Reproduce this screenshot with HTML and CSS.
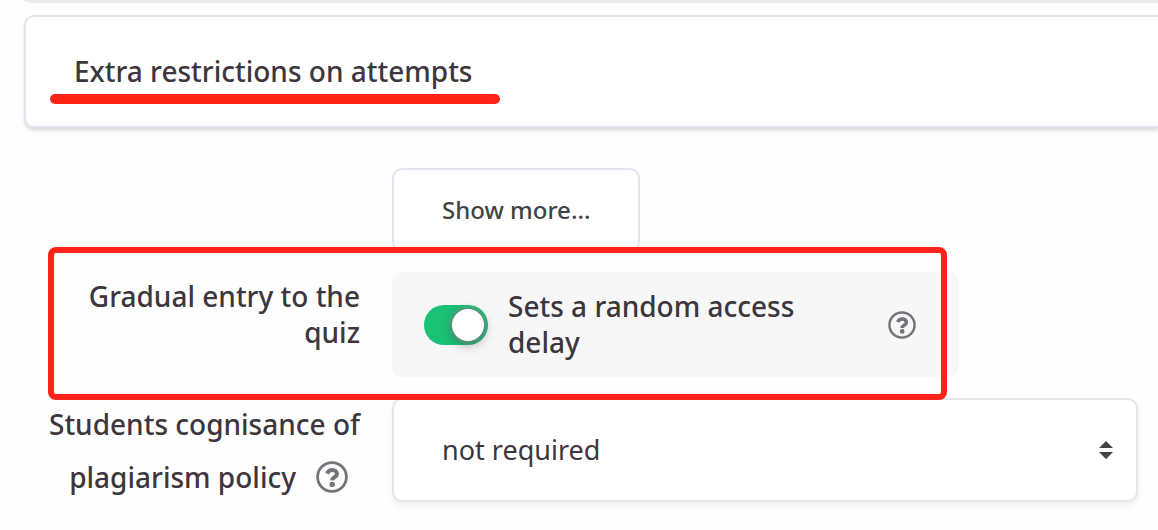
FILE: index.html
```html
<!DOCTYPE html>
<html lang="en">
<head>
<meta charset="utf-8">
<title>Quiz settings</title>
<link rel="stylesheet" href="styles.css">
</head>
<body>
<svg class="sprite" aria-hidden="true">
  <symbol id="help" viewBox="0 0 32 32">
    <circle cx="16" cy="16" r="14.4" fill="none" stroke="currentColor" stroke-width="2.8"/>
    <path d="M11 12.6C12 10.3 13.8 9 16.3 9C19.2 9 21 10.8 21 13C21 16.2 16.4 15.8 16.2 19.4" fill="none" stroke="currentColor" stroke-width="4"/>
    <circle cx="16.2" cy="23.4" r="2.7" fill="currentColor"/>
  </symbol>
</svg>
<main class="page">
  <div class="section-end"></div>
  <section class="card">
    <h2 class="card-title">Extra restrictions on attempts</h2>
  </section>
  <form class="form">
    <div class="field more">
      <button class="show-more" type="button">Show more...</button>
    </div>
    <div class="row marked">
      <label class="label" for="gradual">Gradual entry to the quiz</label>
      <div class="field">
        <div class="panel">
          <input class="switch" type="checkbox" role="switch" id="gradual" checked>
          <label class="panel-text" for="gradual">Sets a random access delay</label>
          <button class="help" type="button" aria-label="Help with gradual entry"><svg class="icon small"><use href="#help"/></svg></button>
        </div>
      </div>
    </div>
    <div class="row policy">
      <div class="label stacked">
        <label for="policy">Students cognisance of</label>
        <div class="label-end">
          <label for="policy">plagiarism policy</label>
          <button class="help" type="button" aria-label="Help with plagiarism policy"><svg class="icon"><use href="#help"/></svg></button>
        </div>
      </div>
      <div class="field select-box">
        <select class="select" id="policy"><option>not required</option></select>
        <svg class="arrows" viewBox="0 0 14 18" aria-hidden="true"><path d="M0 7L7 0L14 7ZM0 11H14L7 18Z" fill="#434343"/></svg>
      </div>
    </div>
  </form>
</main>
</body>
</html>
```
FILE: styles.css
```css
* {
  box-sizing: border-box;
}

body {
  margin: 0;
  background: #fefefe;
  color: #3d363d;
  font: 500 28px/36px "Noto Sans", "Open Sans", sans-serif;
}

.sprite {
  display: none;
}

.page {
  padding-left: 24px;
  overflow: hidden;
}

.section-end {
  height: 3px;
  border-bottom-left-radius: 10px 3px;
  background: #ececec;
  box-shadow: 0 2px 8px rgba(0, 0, 0, 0.04);
}

.card {
  margin-top: 12px;
  padding: 36px 0 37px 48px;
  border: 2px solid #e4e3f0;
  border-right: 0;
  border-radius: 10px 0 0 10px;
  background: #fff;
  box-shadow: 0 3px 3px rgba(0, 0, 0, 0.1), 0 3px 10px rgba(0, 0, 0, 0.03);
}

.card-title {
  position: relative;
  width: fit-content;
  margin: 0;
  font-size: 28px;
  font-weight: 500;
}

.card-title::after {
  content: "";
  position: absolute;
  top: 41px;
  left: -24px;
  right: -28px;
  height: 10px;
  border-radius: 5px;
  background: #ff2318;
}

.form {
  padding: 40px 20px 24px 0;
}

.more {
  margin-left: 368px;
}

.show-more {
  height: 84px;
  padding: 0 48px;
  border: 2px solid #e4e3f0;
  border-radius: 10px;
  background: #fff;
  color: #434343;
  font: inherit;
  font-size: 24px;
  display: block;
}

.row {
  display: grid;
  grid-template-columns: 336px minmax(0, 1fr);
  column-gap: 32px;
}

.marked {
  position: relative;
  margin-top: 20px;
}

.marked::after {
  content: "";
  position: absolute;
  inset: -25px 191px -23px 24px;
  border: 6px solid #ff2318;
  border-radius: 8px;
  pointer-events: none;
}

.label {
  padding: 6px 0 0 24px;
  text-align: right;
}

.panel {
  display: flex;
  align-items: center;
  width: 76%;
  min-height: 105px;
  padding: 0 43px 0 32px;
  border-radius: 10px;
  background: #f7f7f7;
}

.switch {
  appearance: none;
  flex: none;
  display: flex;
  justify-content: flex-end;
  width: 64px;
  height: 40px;
  margin: 0 20px 0 0;
  padding: 4px;
  border-radius: 20px;
  background: #1bc276;
}

.switch::before {
  content: "";
  width: 32px;
  height: 32px;
  border-radius: 50%;
  background: #fff;
  box-shadow: 0 0 4px 1px rgba(140, 125, 135, 0.9), 0 4px 12px rgba(50, 30, 50, 0.35);
}

.panel-text {
  flex: 1;
  max-width: 320px;
  padding-bottom: 2px;
}

.help {
  flex: none;
  display: flex;
  margin: 0 0 0 auto;
  padding: 0;
  border: 0;
  background: none;
  color: #727579;
}

.icon {
  width: 32px;
  height: 32px;
}

.icon.small {
  width: 28px;
  height: 28px;
}

.policy {
  margin-top: 21px;
}

.stacked {
  padding: 8px 0 0;
  white-space: nowrap;
}

.label-end {
  display: flex;
  align-items: center;
  justify-content: flex-end;
  gap: 20px;
  margin-top: 17px;
  padding-right: 12px;
}

.label-end .help {
  margin: 0;
}

.select-box {
  display: grid;
  align-items: center;
}

.select,
.arrows {
  grid-area: 1 / 1;
}

.select {
  appearance: none;
  width: 100%;
  height: 104px;
  padding: 0 48px;
  border: 2px solid #e6e6e6;
  border-radius: 10px;
  background: #fff;
  box-shadow: 0 4px 6px rgba(0, 0, 0, 0.06);
  color: inherit;
  font: inherit;
  font-size: 27px;
  font-weight: 400;
}

.arrows {
  justify-self: end;
  width: 14px;
  height: 18px;
  margin-right: 25px;
  pointer-events: none;
}
```
